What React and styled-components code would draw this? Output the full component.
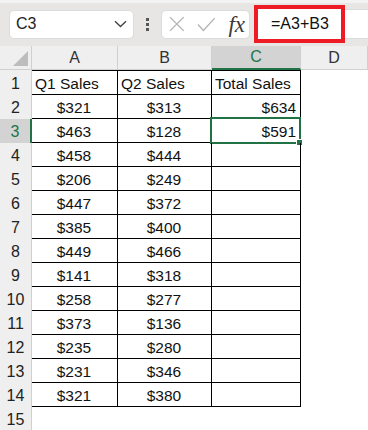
import React from 'react'
import styled, { createGlobalStyle } from 'styled-components'

const GREEN = '#217346'

const GlobalStyle = createGlobalStyle`
  html, body { margin: 0; padding: 0; background: #fff; }
  body { font-family: "Liberation Sans", Arial, sans-serif; }
`

const Page = styled.div`
  width: 368px;
  height: 430px;
  overflow: hidden;
  background: #fff;
`

const Toolbar = styled.div`
  height: 46px;
  box-sizing: border-box;
  display: flex;
  align-items: center;
  padding: 2px 0 3px 9px;
  background: #e7e6e5;
  border-top: 3px solid #f3f3f3;
`

const NameBox = styled.div`
  width: 125px;
  height: 29px;
  box-sizing: border-box;
  display: flex;
  align-items: center;
  justify-content: space-between;
  padding: 0 6px 0 6px;
  background: #fff;
  border: 1px solid #dcdcdc;
  border-radius: 5px;
  font-size: 16px;
  color: #222;
`

const Dots = styled.div`
  display: flex;
  flex-direction: column;
  gap: 2px;
  margin: 0 12px 0 12px;
`

const Dot = styled.span`
  width: 3px;
  height: 3px;
  background: #555;
`

const ButtonGroup = styled.div`
  width: 89px;
  height: 29px;
  box-sizing: border-box;
  display: flex;
  align-items: center;
  padding: 0 4px 0 7px;
  gap: 12px;
  background: #fff;
  border: 1px solid #dcdcdc;
  border-radius: 5px;
`

const Fx = styled.span`
  font-family: "Liberation Serif", "Times New Roman", serif;
  font-style: italic;
  font-size: 23px;
  color: #3a3a3a;
  margin-left: 1px;
  line-height: 1;
`

const FormulaWrap = styled.div`
  flex: 1;
  display: flex;
  align-items: center;
  margin-left: 4px;
`

const Highlight = styled.div`
  width: 91px;
  height: 38px;
  box-sizing: border-box;
  border: 4px solid #ed1c24;
  background: #fff;
  display: flex;
  align-items: center;
  padding-left: 13px;
  font-size: 16px;
  color: #111;
`

const FormulaRest = styled.div`
  flex: 1;
  height: 28px;
  background: #fff;
  border-top: 1px solid #dcdcdc;
  border-bottom: 1px solid #dcdcdc;
`

const Sheet = styled.div`
  display: grid;
  grid-template-columns: 32px 86px 94px 89px 1fr;
  grid-template-rows: 24px 25px;
  grid-auto-rows: 24px;
`

const Corner = styled.div`
  background: #efefef;
  border-right: 1px solid #d0d0d0;
  border-bottom: 1px solid #d0d0d0;
  box-sizing: border-box;
  display: flex;
  align-items: flex-end;
  justify-content: flex-end;
  padding: 0 3px 3px 0;
`

const ColHead = styled.div`
  background: ${p => (p.$active ? '#d3d3d3' : '#efefef')};
  color: ${p => (p.$active ? GREEN : '#333')};
  border-right: 1px solid #d0d0d0;
  border-bottom: ${p => (p.$active ? `2px solid ${GREEN}` : '1px solid #d0d0d0')};
  box-sizing: border-box;
  display: flex;
  align-items: center;
  justify-content: center;
  font-size: 16px;
`

const RowHead = styled.div`
  background: ${p => (p.$active ? '#d3d3d3' : '#efefef')};
  color: ${p => (p.$active ? GREEN : '#222')};
  border-right: ${p => (p.$active ? `2px solid ${GREEN}` : '1px solid #d0d0d0')};
  box-sizing: border-box;
  display: flex;
  align-items: center;
  justify-content: center;
  font-size: 16px;
  padding-top: 2px;
`

const Cell = styled.div`
  position: relative;
  box-sizing: border-box;
  border-right: ${p => (p.$boxed ? '1px solid #000' : 'none')};
  border-bottom: ${p => (p.$boxed ? '1px solid #000' : 'none')};
  border-top: ${p => (p.$top ? '1px solid #000' : 'none')};
  display: flex;
  align-items: center;
  justify-content: ${p => (p.$align === 'right' ? 'flex-end' : p.$align === 'left' ? 'flex-start' : 'center')};
  padding: 3px 4px 0 3px;
  font-size: 15.5px;
  color: #111;
  white-space: nowrap;
`

const Selection = styled.div`
  position: absolute;
  top: -2px;
  left: -2px;
  right: -1px;
  bottom: -2px;
  border: 2px solid ${GREEN};
  pointer-events: none;
`

const Handle = styled.span`
  position: absolute;
  right: -4px;
  bottom: -4px;
  width: 5px;
  height: 5px;
  background: ${GREEN};
  border: 1px solid #fff;
`

const q1 = [321, 463, 458, 206, 447, 385, 449, 141, 258, 373, 235, 231, 321]
const q2 = [313, 128, 444, 249, 372, 400, 466, 318, 277, 136, 280, 346, 380]
const totals = { 2: 634, 3: 591 }

const Chevron = () => (
  <svg width="13" height="8" viewBox="0 0 13 8">
    <path d="M1 1.2 L6.5 6.5 L12 1.2" fill="none" stroke="#444" strokeWidth="1.4" />
  </svg>
)

const Cross = () => (
  <svg width="16" height="16" viewBox="0 0 16 16">
    <path d="M1 1 L15 15 M15 1 L1 15" stroke="#b4b4b4" strokeWidth="1.4" fill="none" />
  </svg>
)

const Check = () => (
  <svg width="19" height="15" viewBox="0 0 19 15">
    <path d="M1 7.5 L6.5 13.5 L18 1" stroke="#b4b4b4" strokeWidth="1.4" fill="none" />
  </svg>
)

const Triangle = () => (
  <svg width="15" height="15" viewBox="0 0 15 15">
    <polygon points="15,0 15,15 0,15" fill="#bdbdbd" />
  </svg>
)

export default function App() {
  const rows = []
  for (let r = 1; r <= 15; r++) {
    const inTable = r <= 14
    const top = r === 1
    let a = '', b = '', c = ''
    if (r === 1) {
      a = 'Q1 Sales'; b = 'Q2 Sales'; c = 'Total Sales'
    } else if (inTable) {
      a = `$${q1[r - 2]}`
      b = `$${q2[r - 2]}`
      c = totals[r] ? `$${totals[r]}` : ''
    }
    rows.push(
      <React.Fragment key={r}>
        <RowHead $active={r === 3}>{r}</RowHead>
        <Cell $boxed={inTable} $top={top} $align={r === 1 ? 'left' : 'center'}>{a}</Cell>
        <Cell $boxed={inTable} $top={top} $align={r === 1 ? 'left' : 'center'}>{b}</Cell>
        <Cell $boxed={inTable} $top={top} $align={r === 1 ? 'left' : 'right'}>
          {c}
          {r === 3 && (
            <Selection>
              <Handle />
            </Selection>
          )}
        </Cell>
        <Cell />
      </React.Fragment>
    )
  }

  return (
    <Page>
      <GlobalStyle />
      <Toolbar>
        <NameBox>
          <span>C3</span>
          <Chevron />
        </NameBox>
        <Dots>
          <Dot />
          <Dot />
          <Dot />
        </Dots>
        <ButtonGroup>
          <Cross />
          <Check />
          <Fx>fx</Fx>
        </ButtonGroup>
        <FormulaWrap>
          <Highlight>=A3+B3</Highlight>
          <FormulaRest />
        </FormulaWrap>
      </Toolbar>
      <Sheet>
        <Corner>
          <Triangle />
        </Corner>
        <ColHead>A</ColHead>
        <ColHead>B</ColHead>
        <ColHead $active>C</ColHead>
        <ColHead>D</ColHead>
        {rows}
      </Sheet>
    </Page>
  )
}
